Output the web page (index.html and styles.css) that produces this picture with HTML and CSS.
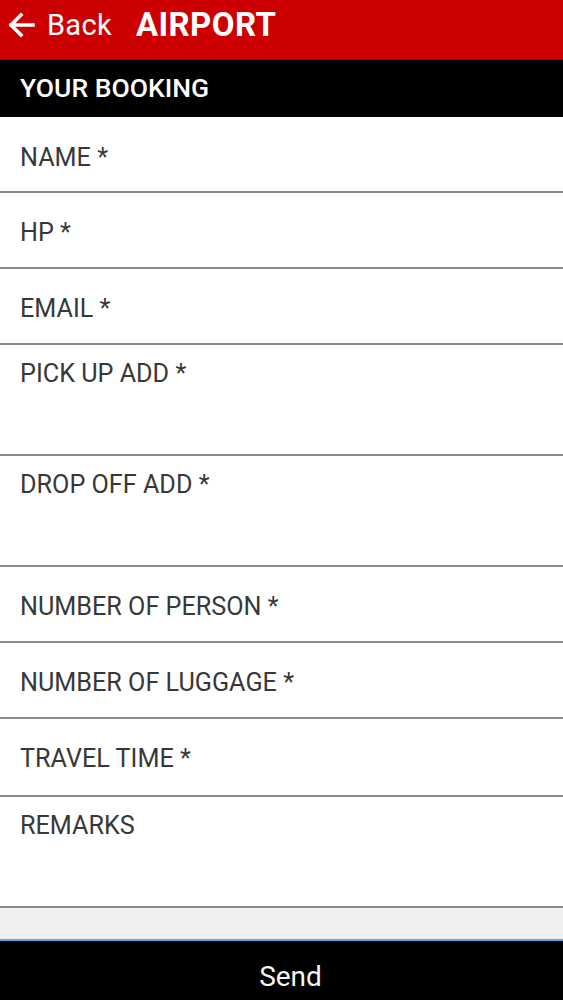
FILE: index.html
```html
<!DOCTYPE html>
<html>
<head>
<meta charset="utf-8">
<link rel="stylesheet" href="styles.css">
</head>
<body>
<div class="app">
  <header class="topbar">
    <div class="back">
      <svg class="arrow" viewBox="0 0 28 28" width="28" height="28">
        <path d="M26 14H4M14 4L4 14L14 24" fill="none" stroke="#fff" stroke-width="3.6" stroke-linecap="square" stroke-linejoin="miter"/>
      </svg>
      <span class="back-text">Back</span>
    </div>
    <h1 class="title">AIRPORT</h1>
  </header>
  <div class="section">YOUR BOOKING</div>
  <form class="form">
    <div class="row">NAME *</div>
    <div class="row">HP *</div>
    <div class="row">EMAIL *</div>
    <div class="row tall">PICK UP ADD *</div>
    <div class="row tall">DROP OFF ADD *</div>
    <div class="row">NUMBER OF PERSON *</div>
    <div class="row">NUMBER OF LUGGAGE *</div>
    <div class="row time">TRAVEL TIME *</div>
    <div class="row tall">REMARKS</div>
  </form>
  <div class="spacer"></div>
  <div class="sendbar">Send</div>
</div>
</body>
</html>
```
FILE: styles.css
```css
* { box-sizing: border-box; margin: 0; padding: 0; }
html, body { width: 563px; height: 1000px; overflow: hidden; background: #fff; }
body { font-family: Roboto, "Noto Sans", "Liberation Sans", sans-serif; }
.app { display: flex; flex-direction: column; height: 1000px; }
.topbar {
  height: 60px;
  background: #cc0000;
  border-bottom: 1px solid #a80000;
  display: flex;
  align-items: center;
  padding-left: 7px;
  padding-bottom: 10px;
  gap: 24px;
  color: #fff;
}
.back { display: flex; align-items: center; gap: 12px; }
.arrow { display: block; }
.back-text { font-size: 29px; font-weight: 400; letter-spacing: 0.3px; }
.title { font-size: 33px; font-weight: 700; letter-spacing: 0.4px; }
.section {
  height: 57px;
  background: #000;
  color: #fff;
  font-size: 26.5px;
  font-weight: 500;
  display: flex;
  align-items: center;
  padding-left: 20px;
  padding-bottom: 3px;
}
.form { display: flex; flex-direction: column; }
.row {
  height: 76px;
  border-bottom: 2px solid #8a8a8a;
  padding: 26px 20px 0;
  font-size: 25.2px;
  line-height: 28px;
  color: #383838;
}
.row:first-child { padding-top: 27px; }
.row.tall { height: 111px; padding-top: 15px; }
.row.time { height: 78px; }
.spacer { flex: 1; background: #efefef; border-bottom: 2px solid #5aa6e8; }
.sendbar {
  height: 59px;
  background: #000;
  color: #f4f4f4;
  font-size: 28px;
  display: flex;
  align-items: center;
  justify-content: center;
  padding-left: 18px;
  padding-top: 12px;
}
```
